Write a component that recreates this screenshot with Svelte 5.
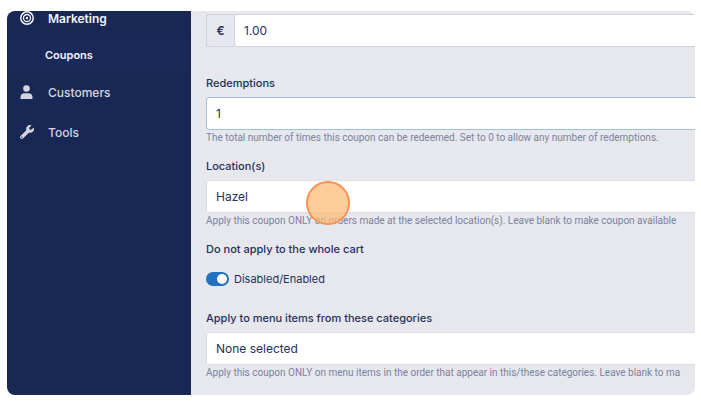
<script>
	let amount = '1.00';
	let redemptions = '1';
	let location = 'Hazel';
	let category = 'None selected';
	let partial = true;
</script>

<main>
	<nav>
		<a class="active" href="#marketing">
			<svg viewBox="0 0 14 14" fill="none" stroke="currentColor">
				<circle cx="7" cy="7" r="6.2" stroke-width="1.5" />
				<circle cx="7" cy="7" r="3.5" stroke-width="1.3" />
				<circle cx="7" cy="7" r="1.2" fill="currentColor" stroke="none" />
			</svg>
			Marketing
		</a>
		<a class="sub" href="#coupons">Coupons</a>
		<a href="#customers">
			<svg viewBox="0 0 14 14" fill="currentColor">
				<circle cx="6.5" cy="3.5" r="3.3" />
				<path d="M.5 14v-1.8C.5 9.8 2.2 8.2 4.5 8.2h4c2.3 0 4 1.6 4 4V13.2q0 .8-.8.8z" />
			</svg>
			Customers
		</a>
		<a href="#tools">
			<svg viewBox="0 0 512 512" fill="currentColor">
				<path
					d="M507.7 109.1c-2.2-9-13.5-12.1-20.1-5.5l-74.4 74.4-67.9-11.3L334 98.9l74.4-74.4c6.6-6.6 3.4-17.9-5.7-20.2-47.4-11.7-99.6.9-136.6 37.9-39.6 39.6-50.6 97.1-34.1 147.2L18.7 402.8c-25 25-25 65.5 0 90.5s65.5 25 90.5 0l213.2-213.2c50.1 16.7 107.5 5.7 147.4-34.2 37.1-37.1 49.7-89.3 37.9-136.8zM64 472a24 24 0 1 1 0-48 24 24 0 0 1 0 48z"
				/>
			</svg>
			Tools
		</a>
	</nav>

	<form>
		<div class="amount">
			<label for="amount">€</label>
			<input id="amount" type="text" bind:value={amount} />
		</div>

		<div class="field">
			<label for="redemptions">Redemptions</label>
			<input id="redemptions" class="focused" type="text" bind:value={redemptions} />
			<p>The total number of times this coupon can be redeemed. Set to 0 to allow any number of redemptions.</p>
		</div>

		<div class="field">
			<label for="location">Location(s)</label>
			<select id="location" bind:value={location}>
				<option>Hazel</option>
			</select>
			<p>Apply this coupon ONLY on orders made at the selected location(s). Leave blank to make coupon available</p>
			<span class="tap"></span>
		</div>

		<fieldset>
			<legend>Do not apply to the whole cart</legend>
			<label class="switch">
				<input type="checkbox" bind:checked={partial} />
				Disabled/Enabled
			</label>
		</fieldset>

		<div class="field">
			<label for="category">Apply to menu items from these categories</label>
			<select id="category" bind:value={category}>
				<option>None selected</option>
			</select>
			<p>Apply this coupon ONLY on menu items in the order that appear in this/these categories. Leave blank to ma</p>
		</div>
	</form>
</main>

<style>
	:global(body) {
		margin: 0;
		background: #fff;
	}

	main {
		display: flex;
		margin: 11px 6px 8px 7px;
		border-radius: 8px;
		overflow: hidden;
		background: #e7e8ed;
		color: #25305a;
		font-family: Inter, sans-serif;
		font-size: 11px;
	}

	nav {
		flex: 0 0 184px;
		background: #192755;
	}

	nav a {
		display: flex;
		align-items: center;
		gap: 14px;
		height: 40px;
		padding-left: 13px;
		color: #d3d6e0;
		font-size: 12px;
		font-weight: 500;
		text-decoration: none;
	}

	nav svg {
		width: 14px;
		height: 14px;
	}

	nav a.active {
		align-items: flex-start;
		height: 27px;
		line-height: 16px;
		color: #f3f4f8;
		font-weight: 600;
	}

	nav a.sub {
		height: 34px;
		margin-right: 4px;
		padding-left: 38px;
		background: #1a2959;
		color: #f3f4f8;
		font-size: 11px;
		font-weight: 600;
	}

	form {
		flex: 1;
		min-width: 0;
		padding: 3px 0 14px 15px;
	}

	.amount {
		display: flex;
		margin: 0 -8px 28px 0;
	}

	.amount label {
		width: 28px;
		box-sizing: border-box;
		border: 1px solid #cfd1dc;
		border-right: 0;
		border-radius: 3px 0 0 3px;
		font-size: 12px;
		font-weight: 600;
		line-height: 31px;
		text-align: center;
	}

	.amount input {
		flex: 1;
		border-radius: 0;
	}

	.field {
		position: relative;
		margin-bottom: 12px;
	}

	.field:last-child {
		margin-bottom: 0;
	}

	.field label,
	legend {
		display: block;
		padding: 0;
		font-weight: 500;
		line-height: 16px;
	}

	input[type='text'],
	select {
		display: block;
		box-sizing: border-box;
		height: 33px;
		padding: 0 9px;
		border: 1px solid #cfd1dc;
		border-radius: 3px;
		outline: none;
		background: #fff;
		color: #25305a;
		font-family: inherit;
		font-size: 12px;
		appearance: none;
	}

	.field input,
	.field select {
		width: calc(100% + 8px);
		margin-top: 6px;
	}

	.field select {
		border-color: #dcdee5;
	}

	input.focused {
		border-color: #a3bedb;
	}

	p {
		margin: 0;
		color: #7a82a0;
		font-family: Roboto, Inter, sans-serif;
		font-size: 10px;
		line-height: 16px;
		white-space: nowrap;
	}

	.tap {
		position: absolute;
		top: 23px;
		left: 100px;
		width: 40px;
		height: 40px;
		border: 2px solid #fb9253;
		border-radius: 50%;
		background: rgba(253, 186, 116, 0.72);
		pointer-events: none;
	}

	fieldset {
		margin: 0 0 23px;
		padding: 0;
		border: 0;
	}

	.switch {
		display: flex;
		align-items: center;
		gap: 5px;
		height: 16px;
		margin-top: 14px;
	}

	.switch input {
		display: flex;
		width: 23px;
		height: 14px;
		box-sizing: border-box;
		margin: 0;
		padding: 2px;
		border-radius: 7px;
		background: #9aa1b8;
		appearance: none;
	}

	.switch input::before {
		content: '';
		width: 10px;
		height: 10px;
		border-radius: 50%;
		background: #fff;
	}

	.switch input:checked {
		justify-content: flex-end;
		background: #236fc0;
	}
</style>
